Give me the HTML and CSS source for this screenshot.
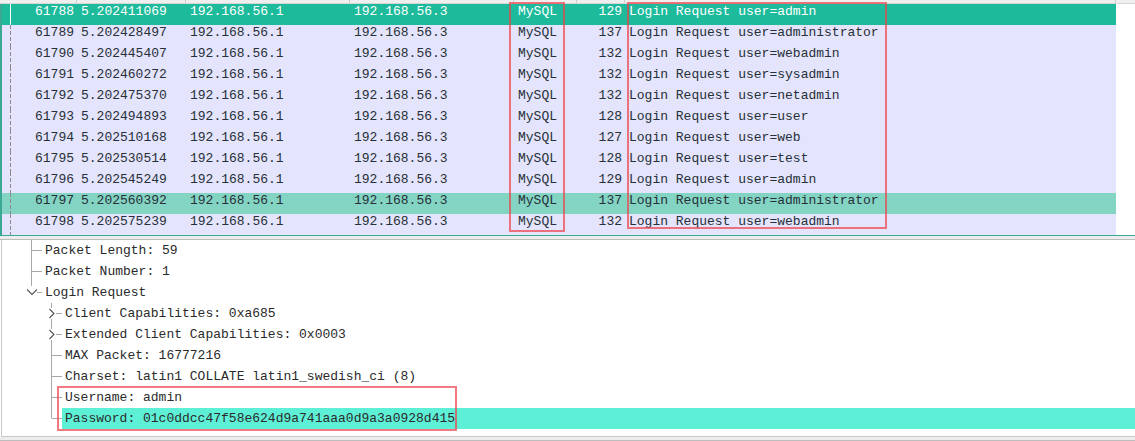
FILE: index.html
```html
<!DOCTYPE html>
<html>
<head>
<meta charset="utf-8">
<link rel="stylesheet" href="styles.css">
</head>
<body>
<div class="app">
  <div class="packet-pane">
    <div class="header">
      <div class="hcell c-no"></div><div class="hcell c-time"></div><div class="hcell c-src"></div><div class="hcell c-dst"></div><div class="hcell c-proto"></div><div class="hcell c-len"></div><div class="hcell c-info"></div>
    </div>
    <div class="rows">
      <div class="row selected"><div class="cell c-no"><span class="rel solid"></span><span class="num">61788</span></div><div class="cell c-time">5.202411069</div><div class="cell c-src">192.168.56.1</div><div class="cell c-dst">192.168.56.3</div><div class="cell c-proto">MySQL</div><div class="cell c-len">129</div><div class="cell c-info">Login Request user=admin</div></div>
      <div class="row"><div class="cell c-no"><span class="rel"></span><span class="num">61789</span></div><div class="cell c-time">5.202428497</div><div class="cell c-src">192.168.56.1</div><div class="cell c-dst">192.168.56.3</div><div class="cell c-proto">MySQL</div><div class="cell c-len">137</div><div class="cell c-info">Login Request user=administrator</div></div>
      <div class="row"><div class="cell c-no"><span class="rel"></span><span class="num">61790</span></div><div class="cell c-time">5.202445407</div><div class="cell c-src">192.168.56.1</div><div class="cell c-dst">192.168.56.3</div><div class="cell c-proto">MySQL</div><div class="cell c-len">132</div><div class="cell c-info">Login Request user=webadmin</div></div>
      <div class="row"><div class="cell c-no"><span class="rel"></span><span class="num">61791</span></div><div class="cell c-time">5.202460272</div><div class="cell c-src">192.168.56.1</div><div class="cell c-dst">192.168.56.3</div><div class="cell c-proto">MySQL</div><div class="cell c-len">132</div><div class="cell c-info">Login Request user=sysadmin</div></div>
      <div class="row"><div class="cell c-no"><span class="rel"></span><span class="num">61792</span></div><div class="cell c-time">5.202475370</div><div class="cell c-src">192.168.56.1</div><div class="cell c-dst">192.168.56.3</div><div class="cell c-proto">MySQL</div><div class="cell c-len">132</div><div class="cell c-info">Login Request user=netadmin</div></div>
      <div class="row"><div class="cell c-no"><span class="rel"></span><span class="num">61793</span></div><div class="cell c-time">5.202494893</div><div class="cell c-src">192.168.56.1</div><div class="cell c-dst">192.168.56.3</div><div class="cell c-proto">MySQL</div><div class="cell c-len">128</div><div class="cell c-info">Login Request user=user</div></div>
      <div class="row"><div class="cell c-no"><span class="rel"></span><span class="num">61794</span></div><div class="cell c-time">5.202510168</div><div class="cell c-src">192.168.56.1</div><div class="cell c-dst">192.168.56.3</div><div class="cell c-proto">MySQL</div><div class="cell c-len">127</div><div class="cell c-info">Login Request user=web</div></div>
      <div class="row"><div class="cell c-no"><span class="rel"></span><span class="num">61795</span></div><div class="cell c-time">5.202530514</div><div class="cell c-src">192.168.56.1</div><div class="cell c-dst">192.168.56.3</div><div class="cell c-proto">MySQL</div><div class="cell c-len">128</div><div class="cell c-info">Login Request user=test</div></div>
      <div class="row"><div class="cell c-no"><span class="rel"></span><span class="num">61796</span></div><div class="cell c-time">5.202545249</div><div class="cell c-src">192.168.56.1</div><div class="cell c-dst">192.168.56.3</div><div class="cell c-proto">MySQL</div><div class="cell c-len">129</div><div class="cell c-info">Login Request user=admin</div></div>
      <div class="row related"><div class="cell c-no"><span class="rel"></span><span class="num">61797</span></div><div class="cell c-time">5.202560392</div><div class="cell c-src">192.168.56.1</div><div class="cell c-dst">192.168.56.3</div><div class="cell c-proto">MySQL</div><div class="cell c-len">137</div><div class="cell c-info">Login Request user=administrator</div></div>
      <div class="row"><div class="cell c-no"><span class="rel"></span><span class="num">61798</span></div><div class="cell c-time">5.202575239</div><div class="cell c-src">192.168.56.1</div><div class="cell c-dst">192.168.56.3</div><div class="cell c-proto">MySQL</div><div class="cell c-len">132</div><div class="cell c-info">Login Request user=webadmin</div></div>
    </div>
    <div class="mark mark-proto"></div>
    <div class="mark mark-info"></div>
  </div>

  <div class="splitter"></div>

  <div class="detail-pane">
    <div class="node">
      <svg class="guide g0" width="40" height="21" viewBox="0 0 40 21"><path d="M29.5 0V21M30 10.5H40" class="ln"/></svg>
      <span class="label">Packet Length: 59</span>
    </div>
    <div class="node">
      <svg class="guide g0" width="40" height="21" viewBox="0 0 40 21"><path d="M29.5 0V21M30 10.5H40" class="ln"/></svg>
      <span class="label">Packet Number: 1</span>
    </div>
    <div class="node">
      <svg class="guide g0" width="40" height="21" viewBox="0 0 40 21"><path d="M29.5 0V4M35 10.5H40" class="ln"/><path d="M25 7.5L30 12.5L35 7.5" class="chev"/></svg>
      <span class="label">Login Request</span>
    </div>
    <div class="node">
      <svg class="guide g1" width="60" height="21" viewBox="0 0 60 21"><path d="M49.5 0V5M49.5 16V21M54 10.5H60" class="ln"/><path d="M47.5 6L52 10.5L47.5 15" class="chev"/></svg>
      <span class="label">Client Capabilities: 0xa685</span>
    </div>
    <div class="node">
      <svg class="guide g1" width="60" height="21" viewBox="0 0 60 21"><path d="M49.5 0V5M49.5 16V21M54 10.5H60" class="ln"/><path d="M47.5 6L52 10.5L47.5 15" class="chev"/></svg>
      <span class="label">Extended Client Capabilities: 0x0003</span>
    </div>
    <div class="node">
      <svg class="guide g1" width="60" height="21" viewBox="0 0 60 21"><path d="M49.5 0V21M50 10.5H60" class="ln"/></svg>
      <span class="label">MAX Packet: 16777216</span>
    </div>
    <div class="node">
      <svg class="guide g1" width="60" height="21" viewBox="0 0 60 21"><path d="M49.5 0V21M50 10.5H60" class="ln"/></svg>
      <span class="label">Charset: latin1 COLLATE latin1_swedish_ci (8)</span>
    </div>
    <div class="node">
      <svg class="guide g1" width="60" height="21" viewBox="0 0 60 21"><path d="M49.5 0V21M50 10.5H60" class="ln"/></svg>
      <span class="label">Username: admin</span>
    </div>
    <div class="node current">
      <svg class="guide g1" width="60" height="21" viewBox="0 0 60 21"><path d="M49.5 0V10.5M50 10.5H60" class="ln"/></svg>
      <span class="label">Password: 01c0ddcc47f58e624d9a741aaa0d9a3a0928d415</span>
    </div>
    <div class="mark mark-cred"></div>
  </div>

  <div class="statusbar"></div>
</div>
</body>
</html>
```

FILE: styles.css
```css
* { box-sizing: border-box; }

html, body {
  margin: 0;
  padding: 0;
  background: #ffffff;
}

body {
  font-family: "Liberation Mono", "DejaVu Sans Mono", monospace;
  font-size: 13px;
  color: #263038;
  width: 1135px;
  height: 441px;
  overflow: hidden;
}

.app {
  display: flex;
  flex-direction: column;
  width: 1135px;
}

/* ---------- packet list ---------- */
.packet-pane {
  position: relative;
  height: 236px;
  border-bottom: 1px solid #3aa892;
  background: #ffffff;
}

.header {
  display: flex;
  height: 4px;
  background: #efefef;
  border-bottom: 1px solid #d6d6d6;
  padding-left: 2px;
}

.hcell {
  height: 3px;
  border-right: 1px solid #cdcdcd;
}

.rows {
  border-left: 2px solid #3aa892;
  display: flex;
  flex-direction: column;
}

.row {
  display: flex;
  width: 1114px;
  height: 21px;
  line-height: 15px;
  background: #e4e4fc;
  white-space: nowrap;
}

.row.selected {
  background: #1dbb9b;
  color: #ffffff;
}

.row.related {
  background: #84d4c4;
}

.cell {
  flex: none;
  padding-left: 4px;
  overflow: hidden;
}

.c-no   { width: 75px; }
.c-time { width: 109px; }
.c-src  { width: 164px; }
.c-dst  { width: 164px; }
.c-proto{ width: 63px; }
.c-len  { width: 48px; }
.c-info { width: 491px; }

.hcell.c-no { width: 75px; }
.hcell.c-info { width: 491px; }

.cell.c-no {
  display: flex;
  padding-left: 0;
  padding-right: 3px;
}

.cell.c-len {
  text-align: right;
  padding-left: 0;
  padding-right: 3px;
}

.rel {
  flex: none;
  width: 1px;
  height: 21px;
  margin-left: 8px;
  background: repeating-linear-gradient(to bottom, #8a8a8a 0 4px, transparent 4px 6px);
}

.rel.solid {
  background: #ffffff;
}

.num {
  margin-left: auto;
}

/* annotation boxes */
.mark {
  position: absolute;
  border: 2px solid rgba(238, 64, 74, 0.7);
  pointer-events: none;
}

.mark-proto {
  left: 509px;
  top: 2px;
  width: 56px;
  height: 230px;
}

.mark-info {
  left: 627px;
  top: 2px;
  width: 260px;
  height: 227px;
}

/* ---------- splitter ---------- */
.splitter {
  height: 4px;
  background: #ececec;
  border-bottom: 1px solid #bdbdbd;
}

/* ---------- detail tree ---------- */
.detail-pane {
  position: relative;
  height: 197px;
  margin-left: 1px;
  border-left: 1px solid #c9c9c9;
  border-bottom: 1px solid #c9c9c9;
  color: #2a2a2a;
}

.node {
  display: flex;
  height: 21px;
  line-height: 21px;
  white-space: nowrap;
}

.guide {
  flex: none;
  display: block;
}

.ln {
  fill: none;
  stroke: #a8a8a8;
  stroke-width: 1;
}

.chev {
  fill: none;
  stroke: #555555;
  stroke-width: 1.1;
}

.label {
  padding-left: 3px;
  flex: 1;
}

.node.current .label {
  background: #5ef0d6;
}

.mark-cred {
  left: 55px;
  top: 146px;
  width: 400px;
  height: 45px;
}

/* ---------- bottom strip ---------- */
.statusbar {
  height: 4px;
  background: #ececec;
  border-bottom: 1px solid #bdbdbd;
}
```
